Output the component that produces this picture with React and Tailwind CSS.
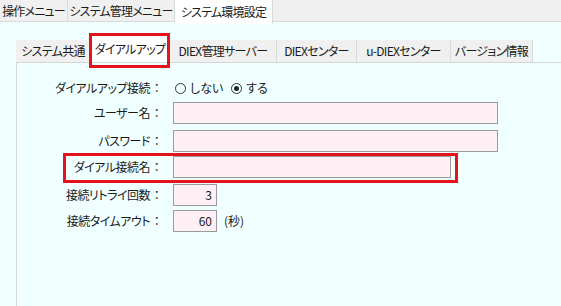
import React from "react";

const font = { fontFamily: '"Noto Sans CJK JP", "Noto Sans", sans-serif' };

function TopTab({ children, active, w }) {
  return (
    <div
      className={
        "flex items-center justify-center border-r border-[#d9d9d9] whitespace-nowrap tracking-[-0.8px] " +
        w +
        (active ? " bg-white h-[24px] relative z-10" : " h-full")
      }
    >
      {children}
    </div>
  );
}

function InnerTab({ children, active, w }) {
  return (
    <div
      className={
        "flex items-center justify-center whitespace-nowrap border-r border-[#d9d9d9] tracking-[-0.7px] " +
        w +
        (active ? " bg-white h-[27px] -mt-[5px] relative" : " bg-[#f0f0f0] h-[22px]")
      }
    >
      {children}
      {active && (
        <div className="absolute left-[-2px] right-[-1px] top-[-2px] bottom-[-6px] border-[3px] border-[#e3141c] pointer-events-none" />
      )}
    </div>
  );
}

function Label({ children }) {
  return (
    <div className="w-[146px] flex justify-end items-center whitespace-nowrap tracking-[-0.5px]">
      <span>{children}</span>
      <span className="w-[13px] text-center">：</span>
    </div>
  );
}

function Input({ w, value }) {
  return (
    <div
      className={"h-[22px] bg-[#fff0f5] border border-[#9a9a9a] flex items-center justify-end pr-[4px] " + w}
    >
      {value}
    </div>
  );
}

function Radio({ checked }) {
  return (
    <span className="inline-flex w-[11px] h-[11px] rounded-full border border-[#333] items-center justify-center mr-[4px]">
      {checked && <span className="w-[5px] h-[5px] rounded-full bg-[#222]" />}
    </span>
  );
}

export default function App() {
  return (
    <div
      className="w-[561px] h-[306px] bg-[#f0ffff] text-[12px] text-[#1a1a1a] overflow-hidden flex flex-col [font-feature-settings:'palt']"
      style={font}
    >
      <div className="h-[22px] bg-[#f0f0f0] border-b border-[#d9d9d9] flex items-start text-[12px]">
        <TopTab w="w-[68px]">操作メニュー</TopTab>
        <TopTab w="w-[107px]">システム管理メニュー</TopTab>
        <TopTab w="w-[98px]" active>システム環境設定</TopTab>
      </div>

      <div className="pl-[16px] pt-[18px] flex flex-col flex-1">
        <div className="flex items-end h-[22px] text-[12px]">
          <InnerTab w="w-[75px]">システム共通</InnerTab>
          <InnerTab w="w-[79px]" active>ダイアルアップ</InnerTab>
          <InnerTab w="w-[107px]">DIEX管理サーバー</InnerTab>
          <InnerTab w="w-[80px]">DIEXセンター</InnerTab>
          <InnerTab w="w-[94px]">u-DIEXセンター</InnerTab>
          <InnerTab w="w-[82px]">バージョン情報</InnerTab>
        </div>
        <div className="flex-1 border-l border-t border-[#d6d6d6] pt-[14px] flex flex-col text-[12px]">
          <div className="flex items-center h-[22px]">
            <Label>ダイアルアップ接続</Label>
            <div className="ml-[12px] flex items-center">
              <Radio />
              <span>しない</span>
              <span className="w-[8px]" />
              <Radio checked />
              <span>する</span>
            </div>
          </div>
          <div className="flex items-center mt-[3px]">
            <Label>ユーザー名</Label>
            <div className="ml-[10px]">
              <Input w="w-[325px]" />
            </div>
          </div>
          <div className="flex items-center mt-[6px]">
            <Label>パスワード</Label>
            <div className="ml-[10px]">
              <Input w="w-[325px]" />
            </div>
          </div>
          <div className="flex items-center mt-[4px] relative">
            <Label>ダイアル接続名</Label>
            <div className="ml-[10px]">
              <Input w="w-[278px]" />
            </div>
            <div className="absolute left-[46px] w-[395px] top-[-3px] bottom-[-5px] border-[3px] border-[#e3141c] pointer-events-none" />
          </div>
          <div className="flex items-center mt-[6px]">
            <Label>接続リトライ回数</Label>
            <div className="ml-[10px]">
              <Input w="w-[44px]" value="3" />
            </div>
          </div>
          <div className="flex items-center mt-[4px]">
            <Label>接続タイムアウト</Label>
            <div className="ml-[10px] flex items-center">
              <Input w="w-[44px]" value="60" />
              <span className="ml-[7px]">(秒)</span>
            </div>
          </div>
        </div>
      </div>
    </div>
  );
}
